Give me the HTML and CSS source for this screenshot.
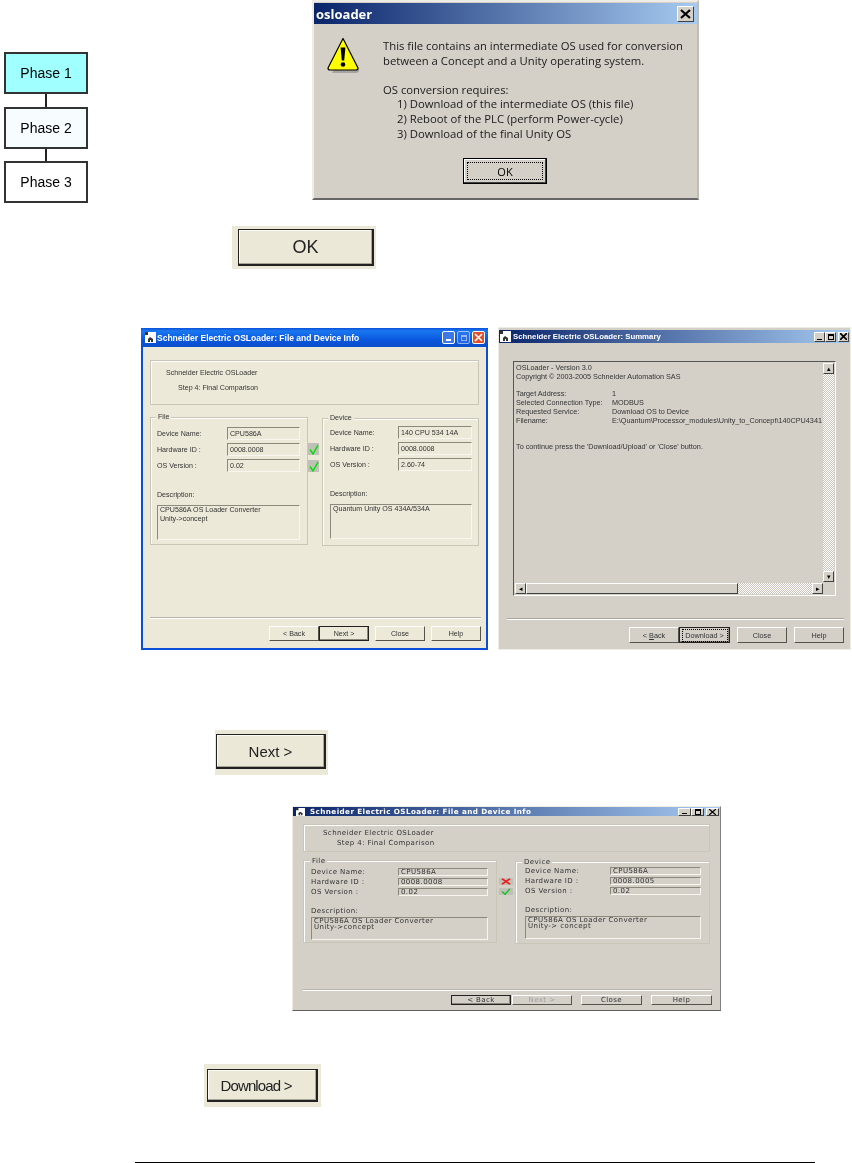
FILE: index.html
```html
<!DOCTYPE html>
<html lang="en">
<head>
    <meta charset="UTF-8">
    <title>OS conversion</title>
    <link rel="stylesheet" href="styles.css">
</head>
<body>
<div class="page">

    <!-- Phase flow on the left -->
    <div class="phases">
        <div class="phase phase-active">Phase 1</div>
        <div class="phase-link"></div>
        <div class="phase phase-next">Phase 2</div>
        <div class="phase-link"></div>
        <div class="phase">Phase 3</div>
    </div>

    <!-- osloader message box -->
    <div class="shot dialog">
        <div class="titlebar dialog-title">
            <span class="dialog-name">osloader</span>
            <span class="dialog-close">
                <svg width="11" height="10" viewBox="0 0 11 10"><path d="M1 1l9 8M10 1l-9 8" stroke="#000" stroke-width="2.2" fill="none"/></svg>
            </span>
        </div>
        <div class="dialog-body">
            <svg class="warn-icon" width="33" height="37" viewBox="0 0 33 37">
                <path d="M18 5l14 28q0 3-3 3H5z" fill="#808080" opacity="0.55"/>
                <path d="M16 1.5L1 31q0 2 2 2h26q2 0 2-2z" fill="#ffff00" stroke="#000" stroke-width="1.2" stroke-linejoin="round"/>
                <path d="M13.6 10.5h4.8l-1.2 13h-2.4z" fill="#000"/>
                <circle cx="16" cy="27.5" r="2.3" fill="#000"/>
            </svg>
            <div class="dialog-text">
                <p>This file contains an intermediate OS used for conversion</p>
                <p>between a Concept and a Unity operating system.</p>
                <p class="dialog-gap">OS conversion requires:</p>
                <p class="dialog-step">1) Download of the intermediate OS (this file)</p>
                <p class="dialog-step">2) Reboot of the PLC (perform Power-cycle)</p>
                <p class="dialog-step">3) Download of the final Unity OS</p>
            </div>
        </div>
        <div class="dialog-ok"><span>OK</span></div>
    </div>

    <div class="shot big-btn ok-btn"><span>OK</span></div>

    <!-- File and Device Info, XP theme -->
    <div class="shot win win-xp">
        <div class="titlebar">
            <svg class="app-icon" width="11" height="11" viewBox="0 0 11 11"><rect width="11" height="11" fill="#fff"/><path d="M0 0h3v3H0zM3 10V7l2-2 3 2v3z" fill="#333"/><rect x="5" y="8" width="1" height="2" fill="#fff"/></svg>
            <span class="win-name">Schneider Electric OSLoader: File and Device Info</span>
            <span class="xp-controls">
                <span class="xp-btn"><i class="glyph-min"></i></span>
                <span class="xp-btn xp-off"><i class="glyph-max"></i></span>
                <span class="xp-btn xp-close">
                    <svg width="9" height="9" viewBox="0 0 9 9"><path d="M1 1l7 7M8 1L1 8" stroke="#fff" stroke-width="1.6"/></svg>
                </span>
            </span>
        </div>
        <div class="step-panel">
            <div>Schneider Electric OSLoader</div>
            <div class="step-name">Step 4: Final Comparison</div>
        </div>
        <div class="groups">
            <div class="group group-file">
                <span class="legend">File</span>
                <div class="fields">
                    <label>Device Name:</label><div class="field">CPU586A</div>
                    <label>Hardware ID :</label><div class="field">0008.0008</div>
                    <label>OS Version :</label><div class="field">0.02</div>
                </div>
                <div class="desc-label">Description:</div>
                <div class="field desc">CPU586A OS Loader Converter<br>Unity-&gt;concept</div>
            </div>
            <div class="checks">
                <span class="check"><svg width="10" height="11" viewBox="0 0 10 10" preserveAspectRatio="none"><path d="M1 5l3 4 5-8" stroke="#00e000" stroke-width="1.4" fill="none"/></svg></span>
                <span class="check"><svg width="10" height="11" viewBox="0 0 10 10" preserveAspectRatio="none"><path d="M1 5l3 4 5-8" stroke="#00e000" stroke-width="1.4" fill="none"/></svg></span>
            </div>
            <div class="group group-device">
                <span class="legend">Device</span>
                <div class="fields">
                    <label>Device Name:</label><div class="field">140 CPU 534 14A</div>
                    <label>Hardware ID :</label><div class="field">0008.0008</div>
                    <label>OS Version :</label><div class="field">2.60-74</div>
                </div>
                <div class="desc-label">Description:</div>
                <div class="field desc">Quantum Unity OS 434A/534A</div>
            </div>
        </div>
        <div class="win-foot">
            <div class="btn-row">
                <span class="btn">&lt; Back</span>
                <span class="btn btn-default">Next &gt;</span>
                <span class="btn btn-sep">Close</span>
                <span class="btn btn-sep">Help</span>
            </div>
        </div>
    </div>

    <!-- Summary, classic theme -->
    <div class="shot win win-summary">
        <div class="titlebar">
            <svg class="app-icon" width="11" height="11" viewBox="0 0 11 11"><rect width="11" height="11" fill="#fff"/><path d="M0 0h3v3H0zM3 10V7l2-2 3 2v3z" fill="#333"/><rect x="5" y="8" width="1" height="2" fill="#fff"/></svg>
            <span class="win-name">Schneider Electric OSLoader: Summary</span>
            <span class="classic-controls">
                <span class="classic-btn"><i class="glyph-min"></i></span>
                <span class="classic-btn"><i class="glyph-max"></i></span>
                <span class="classic-btn classic-x"><svg width="7" height="7" viewBox="0 0 7 7"><path d="M0 0l7 7M7 0L0 7" stroke="#000" stroke-width="1.6"/></svg></span>
            </span>
        </div>
        <div class="summary-box">
            <div class="summary-text">
                <div>OSLoader - Version 3.0</div>
                <div>Copyright &copy; 2003-2005 Schneider Automation SAS</div>
                <div class="kv kv-first"><span>Target Address:</span><span>1</span></div>
                <div class="kv"><span>Selected Connection Type:</span><span>MODBUS</span></div>
                <div class="kv"><span>Requested Service:</span><span>Download OS to Device</span></div>
                <div class="kv"><span>Filename:</span><span>E:\Quantum\Processor_modules\Unity_to_Concept\140CPU4341</span></div>
                <div class="summary-hint">To continue press the 'Download/Upload' or 'Close' button.</div>
            </div>
            <div class="vscroll">
                <span class="sb-btn">&#9652;</span>
                <span class="sb-track"></span>
                <span class="sb-btn">&#9662;</span>
            </div>
            <div class="hscroll">
                <span class="sb-btn">&#9666;</span>
                <span class="sb-thumb"></span>
                <span class="sb-track"></span>
                <span class="sb-btn">&#9656;</span>
            </div>
        </div>
        <div class="win-foot">
            <div class="btn-row">
                <span class="btn"><span>&lt; <u>B</u>ack</span></span>
                <span class="btn btn-default btn-focus"><span>Download &gt;</span></span>
                <span class="btn btn-sep">Close</span>
                <span class="btn btn-sep">Help</span>
            </div>
        </div>
    </div>

    <div class="shot big-btn next-btn"><span>Next &gt;</span></div>

    <!-- Failed comparison, stretched screenshot -->
    <div class="shot win win-wide">
        <div class="titlebar">
            <svg class="app-icon" width="9" height="8" viewBox="0 0 11 11" preserveAspectRatio="none"><rect width="11" height="11" fill="#fff"/><path d="M0 0h3v3H0zM3 10V7l2-2 3 2v3z" fill="#333"/><rect x="5" y="8" width="1" height="2" fill="#fff"/></svg>
            <span class="win-name">Schneider Electric OSLoader: File and Device Info</span>
            <span class="classic-controls">
                <span class="classic-btn"><i class="glyph-min"></i></span>
                <span class="classic-btn"><i class="glyph-max"></i></span>
                <span class="classic-btn classic-x"><svg width="7" height="6" viewBox="0 0 7 7" preserveAspectRatio="none"><path d="M0 0l7 7M7 0L0 7" stroke="#000" stroke-width="1.4"/></svg></span>
            </span>
        </div>
        <div class="step-panel">
            <div>Schneider Electric OSLoader</div>
            <div class="step-name">Step 4: Final Comparison</div>
        </div>
        <div class="groups">
            <div class="group group-file">
                <span class="legend">File</span>
                <div class="fields">
                    <label>Device Name:</label><div class="field">CPU586A</div>
                    <label>Hardware ID :</label><div class="field">0008.0008</div>
                    <label>OS Version :</label><div class="field">0.02</div>
                </div>
                <div class="desc-label">Description:</div>
                <div class="field desc">CPU586A OS Loader Converter<br>Unity-&gt;concept</div>
            </div>
            <div class="checks">
                <span class="check"><svg width="10" height="7" viewBox="0 0 10 10" preserveAspectRatio="none"><path d="M1 1l8 8M9 1L1 9" stroke="#f01818" stroke-width="2" fill="none"/></svg></span>
                <span class="check"><svg width="10" height="7" viewBox="0 0 10 10" preserveAspectRatio="none"><path d="M1 5l3 4 5-8" stroke="#10c020" stroke-width="1.6" fill="none"/></svg></span>
            </div>
            <div class="group group-device">
                <span class="legend">Device</span>
                <div class="fields">
                    <label>Device Name:</label><div class="field">CPU586A</div>
                    <label>Hardware ID :</label><div class="field">0008.0005</div>
                    <label>OS Version :</label><div class="field">0.02</div>
                </div>
                <div class="desc-label">Description:</div>
                <div class="field desc">CPU586A OS Loader Converter<br>Unity-&gt; concept</div>
            </div>
        </div>
        <div class="win-foot">
            <div class="btn-row">
                <span class="btn btn-default">&lt; Back</span>
                <span class="btn btn-disabled">Next &gt;</span>
                <span class="btn btn-sep">Close</span>
                <span class="btn btn-sep">Help</span>
            </div>
        </div>
    </div>

    <div class="shot big-btn download-btn"><span>Download &gt;</span></div>

    <div class="shot page-rule"></div>
</div>
</body>
</html>
```

FILE: styles.css
```css
body {
    margin: 0;
    background-color: #ffffff;
    font-family: "Liberation Sans", Arial, sans-serif;
    color: #000000;
}
p {
    margin: 0;
}
.page {
    position: relative;
    width: 852px;
    height: 1163px;
    overflow: hidden;
}

/* screenshots are pasted on the page like pictures on a canvas */
.shot {
    position: absolute;
    box-sizing: border-box;
}

/* Phase flow */
.phases {
    position: absolute;
    left: 4px;
    top: 52px;
    width: 84px;
    display: flex;
    flex-direction: column;
    align-items: center;
    filter: blur(0.3px);
}
.phase {
    box-sizing: border-box;
    width: 84px;
    height: 42px;
    border: 2px solid #333333;
    background-color: #ffffff;
    display: flex;
    align-items: center;
    justify-content: center;
    font-size: 14px;
}
.phase-active {
    background-color: #a0ffff;
}
.phase-next {
    background-color: #f7fcff;
}
.phase-link {
    width: 2px;
    height: 12.5px;
    background-color: #222222;
}

/* Message box */
.dialog {
    left: 312px;
    top: 0;
    width: 387px;
    height: 200px;
    background-color: #d4d0c8;
    border-top: 2px solid #efece6;
    border-left: 2px solid #efece6;
    border-right: 2px solid #c0bdb5;
    border-bottom: 2px solid #666666;
    padding-top: 1px;
    filter: blur(0.3px);
}
.titlebar {
    display: flex;
    align-items: center;
    background: linear-gradient(90deg, #0a246a, #a6caf0);
    color: #ffffff;
    font-weight: bold;
}
.dialog-title {
    height: 21px;
    padding: 0 2px;
}
.dialog-name {
    font-size: 13px;
    font-family: "Open Sans", sans-serif;
    flex: 1;
}
.dialog-close {
    width: 17px;
    height: 16px;
    margin-right: 1px;
    box-sizing: border-box;
    background-color: #d4d0c8;
    border: 1px solid;
    border-color: #ffffff #404040 #404040 #ffffff;
    display: flex;
    align-items: center;
    justify-content: center;
}
.dialog-body {
    display: flex;
    padding: 13px 0 0 13px;
}
.warn-icon {
    flex: none;
    margin-right: 23px;
}
.dialog-text {
    font-family: "Open Sans", sans-serif;
    font-size: 11.3px;
    line-height: 14.6px;
    color: #1a1a1a;
    padding-top: 2px;
}
.dialog-gap {
    margin-top: 14.6px;
}
.dialog-step {
    padding-left: 14px;
}
.dialog-ok {
    box-sizing: border-box;
    width: 84px;
    height: 26px;
    margin: 17px 0 0 149px;
    border: 1px solid #000000;
    box-shadow: inset -1px -1px 0 #404040, inset 1px 1px 0 #ffffff;
    padding: 3px;
    font-family: "Open Sans", sans-serif;
    font-size: 11px;
}
.dialog-ok span {
    display: flex;
    height: 100%;
    align-items: center;
    justify-content: center;
    border: 1px dotted #000000;
    box-sizing: border-box;
}

/* Big cropped buttons */
.big-btn {
    background-color: #ebe8d8;
    font-size: 15px;
    color: #222222;
    filter: blur(0.3px);
}
.big-btn span {
    display: flex;
    align-items: center;
    justify-content: center;
    box-sizing: border-box;
    height: 100%;
    background-color: #ebe8d8;
    border: 1px solid #222222;
    border-right-width: 2px;
    border-bottom-width: 2px;
    box-shadow: inset -1px -1px 0 #a8a498, inset 1px 1px 0 #fbfaf4;
}
.ok-btn {
    left: 232px;
    top: 226px;
    width: 144px;
    height: 43px;
    padding: 3px 2px 3px 6px;
    font-size: 18px;
}
.next-btn {
    left: 215px;
    top: 730px;
    width: 113px;
    height: 45px;
    padding: 4px 2px 6px 1px;
}
.download-btn {
    left: 204px;
    top: 1064px;
    width: 117px;
    height: 43px;
    padding: 5px 3px 5px 3px;
    letter-spacing: -0.85px;
}
.download-btn span {
    padding-right: 12px;
}

/* OSLoader windows */
.win {
    display: flex;
    flex-direction: column;
    filter: blur(0.35px);
    color: #333333;
}
.win-name {
    flex: 1;
    white-space: nowrap;
    overflow: hidden;
}
.app-icon {
    flex: none;
}
.fields {
    display: grid;
    align-items: center;
}
.field {
    box-sizing: border-box;
    height: 100%;
    border: 1px solid;
    border-color: #8c897c #f8f6ee #f8f6ee #8c897c;
    white-space: nowrap;
    overflow: hidden;
    display: flex;
    align-items: center;
    padding-left: 2px;
}
.desc {
    display: block;
}
.group {
    position: relative;
    box-sizing: border-box;
    border: 1px solid #c9c6b8;
    box-shadow: inset 1px 1px 0 #ffffff;
}
.legend {
    position: absolute;
    background-color: inherit;
}
.checks {
    display: flex;
    flex-direction: column;
}
.check {
    display: flex;
    align-items: center;
    justify-content: center;
    background-color: #c0bfb8;
}
.step-panel {
    box-sizing: border-box;
    border: 1px solid #c9c6b8;
}
.groups {
    display: flex;
    align-items: flex-start;
}
.win-foot {
    margin-top: auto;
    border-top: 1px solid #b8b5a8;
    box-shadow: inset 0 1px 0 #ffffff;
}
.btn-row {
    display: flex;
    justify-content: flex-end;
}
.btn {
    box-sizing: border-box;
    display: flex;
    align-items: center;
    justify-content: center;
    border: 1px solid;
    border-color: #ffffff #55544c #55544c #ffffff;
}
.btn-default {
    border-color: #222222;
    box-shadow: inset -1px -1px 0 #8c897c;
}
.btn-disabled {
    color: #a0a0a0;
}

/* XP themed window */
.win-xp {
    left: 141px;
    top: 328px;
    width: 347px;
    height: 322px;
    background-color: #ece9d8;
    border: 2px solid #0b4fd8;
    border-top: 0;
    padding-bottom: 7px;
    font-size: 7.1px;
}
.win-xp .titlebar {
    height: 19px;
    margin: 0 -2px;
    padding: 0 3px 0 4px;
    border-radius: 3px 3px 0 0;
    background: linear-gradient(180deg, #0a50d8 0%, #1a78f0 15%, #0a58e0 60%, #0a4cc8 100%);
    font-size: 8.5px;
    gap: 1px;
}
.xp-controls {
    display: flex;
    gap: 2px;
}
.xp-btn {
    box-sizing: border-box;
    width: 13px;
    height: 13px;
    border: 1px solid #ffffff;
    border-radius: 2px;
    background-color: #3c78e8;
    display: flex;
    align-items: center;
    justify-content: center;
}
.xp-off {
    opacity: 0.55;
}
.xp-close {
    background-color: #e0502c;
}
.glyph-min {
    display: block;
    width: 5px;
    height: 2px;
    background-color: #ffffff;
    align-self: flex-end;
    margin-bottom: 2px;
}
.glyph-max {
    display: block;
    width: 6px;
    height: 6px;
    border: 1px solid #ffffff;
    border-top-width: 2px;
    box-sizing: border-box;
}
.win-xp .step-panel {
    height: 45px;
    margin: 13px 7px 0;
    padding: 5px 0 0 15px;
    line-height: 15px;
    box-shadow: inset 1px 1px 0 #ffffff;
}
.win-xp .step-name {
    padding-left: 12px;
}
.win-xp .groups {
    margin: 12px 7px 0;
}
.win-xp .group {
    background-color: #ece9d8;
}
.win-xp .group-file {
    width: 158px;
    height: 128px;
    padding: 9px 0 0 6px;
}
.win-xp .group-device {
    width: 157px;
    height: 128px;
    margin-top: 1px;
    padding: 7px 0 0 7px;
}
.win-xp .legend {
    top: -5px;
    left: 5px;
    padding: 0 2px;
}
.win-xp .group-file .fields {
    grid-template-columns: 70px 73px;
    grid-auto-rows: 13px;
    row-gap: 3px;
}
.win-xp .group-device .fields {
    grid-template-columns: 68px 74px;
    grid-auto-rows: 13px;
    row-gap: 3px;
}
.win-xp .desc-label {
    margin-top: 19px;
    height: 14px;
}
.win-xp .desc {
    height: 35px;
    line-height: 9px;
}
.win-xp .group-file .desc {
    width: 143px;
}
.win-xp .group-device .desc {
    width: 142px;
}
.win-xp .checks {
    width: 14px;
    padding-top: 26px;
    gap: 5px;
}
.win-xp .check {
    width: 11px;
    height: 12px;
}
.win-xp .win-foot {
    margin: auto 5px 0 7px;
    padding-top: 8px;
}
.win-xp .btn {
    width: 50px;
    height: 15px;
}
.win-xp .btn-sep {
    margin-left: 6px;
}

/* Summary window */
.win-summary {
    left: 498px;
    top: 327px;
    width: 353px;
    height: 323px;
    background-color: #d4d0c8;
    border: 1px solid #efece6;
    padding: 2px 0 6px;
    font-size: 7.25px;
}
.win-summary .titlebar {
    height: 13px;
    padding: 0 1px;
    font-size: 7.8px;
    gap: 2px;
}
.classic-controls {
    display: flex;
    gap: 0;
}
.classic-btn {
    box-sizing: border-box;
    width: 11px;
    height: 10px;
    background-color: #d4d0c8;
    border: 1px solid;
    border-color: #ffffff #404040 #404040 #ffffff;
    display: flex;
    align-items: center;
    justify-content: center;
}
.classic-btn .glyph-min {
    background-color: #000000;
    height: 1px;
    margin-bottom: 1px;
}
.classic-btn .glyph-max {
    border-color: #000000;
    width: 6px;
    height: 6px;
}
.classic-x {
    margin-left: 2px;
}
.summary-box {
    box-sizing: border-box;
    width: 323px;
    height: 235px;
    margin: 18px 0 0 14px;
    border: 1px solid;
    border-color: #555555 #ffffff #ffffff #555555;
    padding: 1px;
    display: grid;
    grid-template-columns: minmax(0, 1fr) 11px;
    grid-template-rows: minmax(0, 1fr) 11px;
    line-height: 9px;
}
.summary-text {
    padding: 0 0 0 1px;
    white-space: nowrap;
    overflow: hidden;
}
.kv {
    display: grid;
    grid-template-columns: 96px 1fr;
}
.kv-first {
    margin-top: 8px;
}
.summary-hint {
    margin-top: 17px;
}
.vscroll {
    display: flex;
    flex-direction: column;
    padding-bottom: 1px;
}
.hscroll {
    display: flex;
}
.sb-btn {
    box-sizing: border-box;
    flex: none;
    width: 11px;
    height: 11px;
    border: 1px solid;
    border-color: #ffffff #404040 #404040 #ffffff;
    background-color: #d4d0c8;
    display: flex;
    align-items: center;
    justify-content: center;
    font-size: 7px;
    color: #000000;
}
.sb-track {
    flex: 1;
    background-color: #d4d0c8;
    background-image: repeating-conic-gradient(#ffffff 0 25%, #c8c4bc 0 50%);
    background-size: 2px 2px;
}
.sb-thumb {
    box-sizing: border-box;
    width: 212px;
    border: 1px solid;
    border-color: #ffffff #404040 #404040 #ffffff;
}
.win-summary .win-foot {
    margin: auto 6px 0 8px;
    padding-top: 8px;
    border-top-color: #a8a59c;
}
.win-summary .btn {
    width: 50px;
    height: 16px;
}
.win-summary .btn-default {
    width: 51px;
}
.win-summary .btn-sep {
    margin-left: 7px;
}
.btn-focus span {
    border: 1px dotted #000000;
    padding: 1px 0;
    width: 44px;
    text-align: center;
}

/* Stretched window */
.win-wide {
    left: 292px;
    top: 806px;
    width: 429px;
    height: 205px;
    background-color: #d4d0c8;
    border: 1px solid #efece6;
    border-bottom-color: #606060;
    border-right-color: #808080;
    padding-bottom: 5px;
    font-family: "DejaVu Sans", sans-serif;
    font-size: 7px;
    letter-spacing: 0.42px;
}
.win-wide .titlebar {
    height: 9px;
    padding: 0 1px 0 3px;
    font-size: 7.2px;
    gap: 5px;
}
.win-wide .classic-btn {
    width: 13px;
    height: 8px;
}
.win-wide .step-panel {
    height: 28px;
    margin: 8px 10px 0;
    padding: 3px 0 0 19px;
    line-height: 10px;
    box-shadow: inset 1px 1px 0 #ffffff;
}
.win-wide .step-name {
    padding-left: 14px;
}
.win-wide .groups {
    margin: 8px 10px 0;
}
.win-wide .group {
    background-color: #d4d0c8;
}
.win-wide .group-file {
    width: 194px;
    height: 83px;
    padding: 7px 0 0 7px;
}
.win-wide .group-device {
    width: 195px;
    height: 83px;
    margin-top: 1px;
    padding: 5px 0 0 9px;
}
.win-wide .legend {
    top: -4px;
    left: 6px;
    padding: 0 2px;
}
.win-wide .group-file .fields {
    grid-template-columns: 87px 90px;
    grid-auto-rows: 8px;
    row-gap: 2px;
}
.win-wide .group-device .fields {
    grid-template-columns: 85px 91px;
    grid-auto-rows: 8px;
    row-gap: 2px;
}
.win-wide .desc-label {
    margin-top: 10px;
    height: 11px;
    line-height: 11px;
}
.win-wide .desc {
    height: 23px;
    line-height: 6px;
}
.win-wide .group-file .desc {
    width: 177px;
}
.win-wide .group-device .desc {
    width: 176px;
}
.win-wide .checks {
    width: 18px;
    padding-top: 18px;
    gap: 3px;
    align-items: center;
}
.win-wide .check {
    width: 14px;
    height: 7px;
}
.win-wide .win-foot {
    margin: auto 8px 0 10px;
    padding-top: 5px;
}
.win-wide .btn {
    width: 60px;
    height: 10px;
}
.win-wide .btn-disabled {
    margin-left: 1px;
}
.win-wide .btn-sep {
    width: 61px;
    margin-left: 9px;
}

.page-rule {
    left: 135px;
    top: 1162px;
    width: 680px;
    height: 1px;
    background-color: #000000;
}
```
